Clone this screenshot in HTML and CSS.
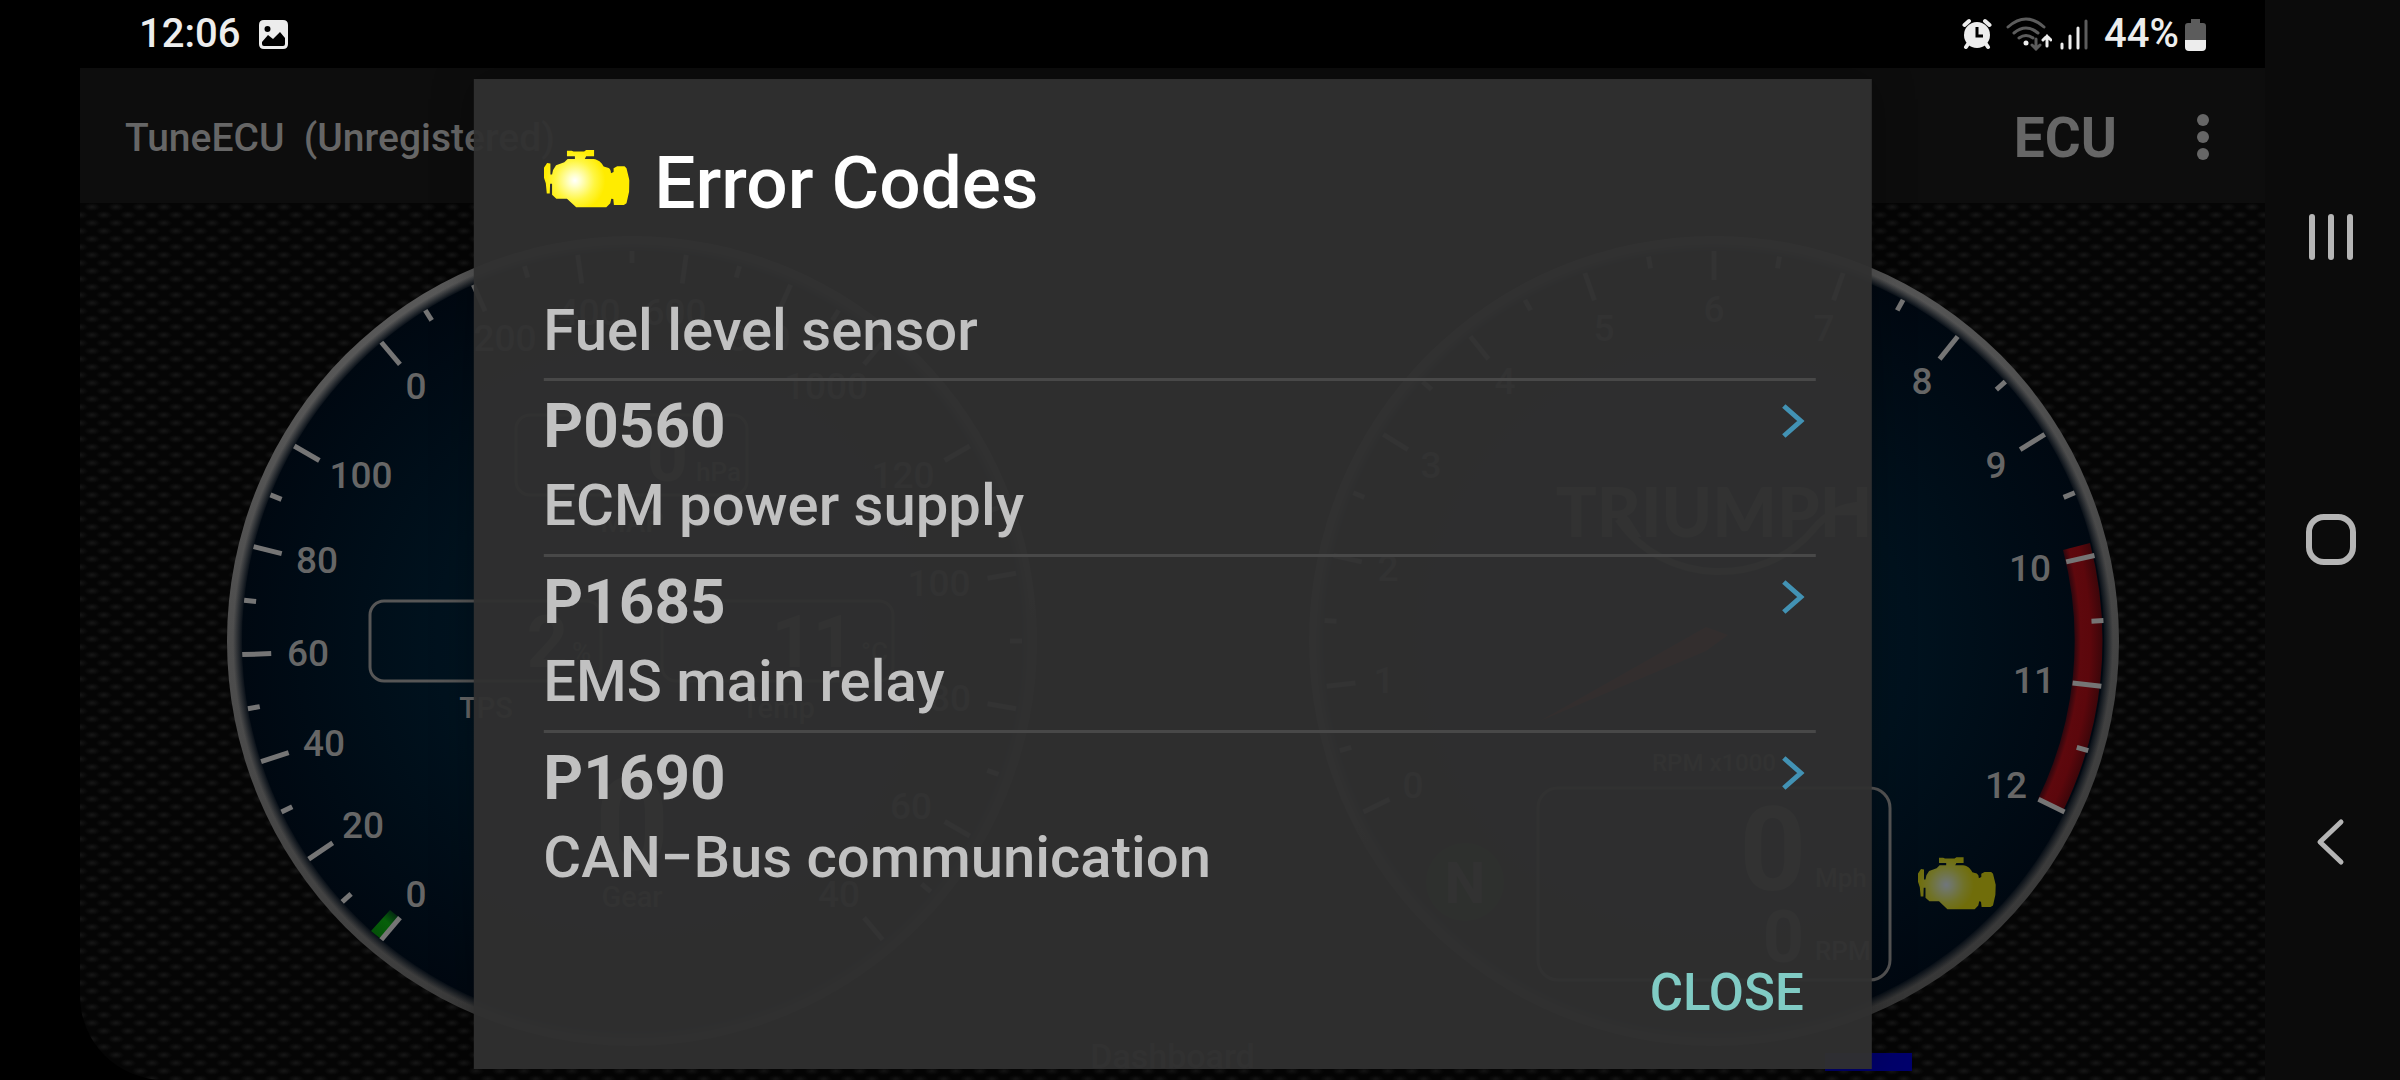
FILE: index.html
```html
<!DOCTYPE html>
<html lang="en">
<head>
    <meta charset="UTF-8">
    <meta name="viewport" content="width=device-width, initial-scale=1.0">
    <title>TuneECU - Error Codes</title>
    <link rel="stylesheet" href="styles.css">
</head>
<body>
    <!-- Shared drawings -->
    <svg class="defs" width="0" height="0" aria-hidden="true">
        <defs>
            <radialGradient id="engineFill" gradientUnits="userSpaceOnUse" cx="94" cy="92" r="92">
                <stop offset="0" stop-color="#ffffff"/>
                <stop offset="0.2" stop-color="#ffffc8"/>
                <stop offset="0.65" stop-color="#fff640"/>
                <stop offset="1" stop-color="#ffec00"/>
            </radialGradient>
            <radialGradient id="face" gradientUnits="userSpaceOnUse" cx="0" cy="0" r="392">
                <stop offset="0" stop-color="#001624"/>
                <stop offset="0.5" stop-color="#00121e"/>
                <stop offset="0.85" stop-color="#000b15"/>
                <stop offset="1" stop-color="#000811"/>
            </radialGradient>
            <linearGradient id="rim" x1="0.3" y1="0" x2="0.6" y2="1">
                <stop offset="0" stop-color="#5a5a5a"/>
                <stop offset="0.5" stop-color="#4a4a4a"/>
                <stop offset="1" stop-color="#363636"/>
            </linearGradient>
            <radialGradient id="rimShade" gradientUnits="userSpaceOnUse" cx="0" cy="0" r="405">
                <stop offset="0.96" stop-color="#000811" stop-opacity="1"/>
                <stop offset="0.985" stop-color="#000811" stop-opacity="0"/>
            </radialGradient>
            <radialGradient id="redZone" gradientUnits="userSpaceOnUse" cx="0" cy="0" r="388">
                <stop offset="0.925" stop-color="#20060e"/>
                <stop offset="0.945" stop-color="#5e080d"/>
                <stop offset="0.97" stop-color="#5c070c"/>
                <stop offset="1" stop-color="#3d060a"/>
            </radialGradient>
            <linearGradient id="greenZone" gradientUnits="userSpaceOnUse" x1="-262" y1="292" x2="-240" y2="268">
                <stop offset="0" stop-color="#044f08"/>
                <stop offset="0.6" stop-color="#06600a"/>
                <stop offset="1" stop-color="#022312"/>
            </linearGradient>
        </defs>
        <symbol id="engine" viewBox="0 0 260 175">
            <path fill="url(#engineFill)" d="M70 2H84L90 4H122L128 0H152V19H128L124 27H150C166 29 175 38 181 50L196 54Q203 58 203 70L211 66V55L222 49H244L250 55L259 92L258 125L250 161L242 166H212L210 148L204 147L201 161L189 173H98L70 147H38L25 135V102H19L18 131H9L6 100L0 82V54L10 39L20 41V74H25L28 60L37 46L62 37L72 27H94V19H70Z"/>
        </symbol>
    </svg>

    <div class="device">
        <div class="main">
            <header class="status-bar">
                <div class="status-group">
                    <span>12:06</span>
                    <svg class="icon-picture" viewBox="0 0 29 29" width="29" height="29">
                        <path fill="#ededed" fill-rule="evenodd" d="M5 0H24Q29 0 29 5V24Q29 29 24 29H5Q0 29 0 24V5Q0 0 5 0ZM8.500 6A3 3 0 1 0 8.500 12A3 3 0 1 0 8.500 6ZM3 22V24Q3 26 5 26H24Q26 26 26 24V18L21 12L14 19L9 15Z"/>
                    </svg>
                </div>
                <div class="status-group status-right">
                    <svg viewBox="0 0 30 32" width="30" height="32">
                        <g fill="none" stroke="#ededed" stroke-width="4" stroke-linecap="round">
                            <path d="M2.500 7L7 3M27.500 7L23 3M6 26L4 29M24 26L26 29"/>
                        </g>
                        <circle cx="15" cy="17" r="13" fill="#ededed"/>
                        <path d="M15 9V18H21" fill="none" stroke="#000" stroke-width="3"/>
                    </svg>
                    <svg class="icon-wifi" viewBox="0 0 46 34" width="46" height="34">
                        <g fill="none" stroke="#5c5c5c" stroke-width="3" stroke-linecap="round">
                            <path d="M2 10Q20 -6 38 10M8 16Q20 6 32 16M13 21Q20 16 27 21"/>
                            <path d="M30 22V32M26 28L30 32L34 28"/>
                        </g>
                        <circle cx="20" cy="26" r="2.500" fill="#ededed"/>
                        <path d="M41 29V19M37 23L41 19L45 23" fill="none" stroke="#ededed" stroke-width="3" stroke-linecap="round"/>
                    </svg>
                    <svg class="icon-signal" viewBox="0 0 28 32" width="28" height="32">
                        <g fill="none" stroke="#ededed" stroke-width="3" stroke-linecap="round">
                            <path d="M2 26V30M10 18V30M18 10V30"/>
                            <path d="M26 3V30" stroke="#5c5c5c"/>
                        </g>
                    </svg>
                    <span>44%</span>
                    <svg class="icon-battery" viewBox="0 0 21 32" width="21" height="32">
                        <path fill="#5c5c5c" d="M6 0H15V4H18Q21 4 21 7V21H0V7Q0 4 3 4H6Z"/>
                        <path fill="#ededed" d="M0 21H21V28Q21 32 17 32H4Q0 32 0 28Z"/>
                    </svg>
                </div>
            </header>

            <div class="app">
                <div class="app-bar">
                    <h1 class="app-title">TuneECU&nbsp; (Unregistered)</h1>
                    <div class="app-actions">
                        <button class="ecu-button">ECU</button>
                        <button class="menu-button" aria-label="More options">
                            <svg viewBox="0 0 12 48" width="12" height="48" fill="#666">
                                <circle cx="6" cy="6" r="6"/>
                                <circle cx="6" cy="23" r="6"/>
                                <circle cx="6" cy="40" r="6"/>
                            </svg>
                        </button>
                    </div>
                </div>

                <div class="dashboard">
                    <svg class="gauge" viewBox="-405 -405 810 810">
                        <circle r="405" fill="url(#rim)"/>
                        <circle r="400" fill="url(#rimShade)"/>
                        <circle r="390" fill="url(#face)"/>
                        <path fill="url(#greenZone)" d="M-261 290A390 390 0 0 0 -251 298L-232 277A361 361 0 0 1 -242 269Z"/>
                        <g class="ticks" data-start="220" data-end="300" data-step="16"></g>
                        <g class="ticks" data-start="320" data-end="400" data-step="16"></g>
                        <g class="ticks" data-start="60" data-end="140" data-step="20"></g>
                        <g class="scale">
                            <text x="-216" y="266">0</text>
                            <text x="-269" y="197">20</text>
                            <text x="-308" y="115">40</text>
                            <text x="-324" y="25">60</text>
                            <text x="-315" y="-68">80</text>
                            <text x="-271" y="-153">100</text>
                            <text x="-216" y="-242">0</text>
                            <text x="-127" y="-290">200</text>
                            <text x="-43" y="-316">400</text>
                            <text x="43" y="-316">600</text>
                            <text x="127" y="-290">800</text>
                            <text x="194" y="-242">1000</text>
                            <text x="271" y="-153">120</text>
                            <text x="307" y="-45">100</text>
                            <text x="318" y="70">80</text>
                            <text x="279" y="178">60</text>
                            <text x="207" y="266">40</text>
                        </g>
                        <g class="box">
                            <rect x="-116" y="-226" width="231" height="80" rx="14"/>
                            <rect x="-262" y="-40" width="231" height="80" rx="14"/>
                            <rect x="30" y="-40" width="231" height="80" rx="14"/>
                        </g>
                        <g class="readout">
                            <text x="56" y="-160">0</text>
                            <text x="-64" y="26">2</text>
                            <text x="222" y="26">11</text>
                        </g>
                        <text class="readout-gear" x="0" y="229">0</text>
                        <g class="unit">
                            <text x="64" y="-160">hPa</text>
                            <text x="-60" y="20">%</text>
                            <text x="229" y="20">°C</text>
                        </g>
                        <g class="caption">
                            <text x="0" y="-109">MAP</text>
                            <text x="-146" y="77">TPS</text>
                            <text x="146" y="77">Temp</text>
                            <text x="0" y="266">Gear</text>
                        </g>
                    </svg>

                    <svg class="gauge" viewBox="-405 -405 810 810">
                        <circle r="405" fill="url(#rim)"/>
                        <circle r="400" fill="url(#rimShade)"/>
                        <circle r="390" fill="url(#face)"/>
                        <path fill="url(#redZone)" d="M376 -98A388 388 0 0 1 349 170L324 158A360 360 0 0 0 349 -91Z"/>
                        <g class="ticks" data-start="-116" data-end="116" data-count="12"></g>
                        <g class="scale">
                            <text x="-301" y="157">0</text>
                            <text x="-330" y="52">1</text>
                            <text x="-326" y="-60">2</text>
                            <text x="-283" y="-163">3</text>
                            <text x="-209" y="-247">4</text>
                            <text x="-110" y="-300">5</text>
                            <text x="0" y="-319">6</text>
                            <text x="110" y="-300">7</text>
                            <text x="208" y="-247">8</text>
                            <text x="282" y="-163">9</text>
                            <text x="316" y="-60">10</text>
                            <text x="320" y="52">11</text>
                            <text x="292" y="157">12</text>
                        </g>
                        <text class="brand" x="0" y="-104">TRIUMPH</text>
                        <path d="M-96 -122C-50 -54 50 -54 98 -110Q118 -136 150 -136" fill="none" stroke="#606060" stroke-width="7"/>
                        <path d="M-174 80L-8 -14L14 -6L-8 10Z" fill="#8a0c10"/>
                        <text class="caption-small" x="0" y="130">RPM x1000</text>
                        <g class="box">
                            <rect x="-176" y="147" width="352" height="192" rx="20"/>
                        </g>
                        <circle cx="-249" cy="241" r="39" fill="#0a420a"/>
                        <text class="neutral" x="-249" y="262">N</text>
                        <text class="readout-speed" x="92" y="249">0</text>
                        <text class="readout" x="90" y="321">0</text>
                        <g class="unit">
                            <text x="101" y="246">Mph</text>
                            <text x="101" y="319">RPM</text>
                        </g>
                        <use href="#engine" x="204" y="216" width="78" height="53" opacity="0.44"/>
                    </svg>

                    <span class="page-name">Dashboard</span>
                    <span class="page-marker"></span>
                </div>
            </div>

            <div class="dialog" role="dialog" aria-labelledby="dialogTitle">
                <div class="dialog-head">
                    <svg class="dialog-icon" viewBox="0 0 260 175"><use href="#engine"/></svg>
                    <h2 id="dialogTitle">Error Codes</h2>
                </div>
                <ul class="codes">
                    <li class="code-item">
                        <span class="code-text">Fuel level sensor</span>
                    </li>
                    <li class="code-item">
                        <span class="code">P0560</span>
                        <svg class="chevron" viewBox="0 0 24 36"><path d="M3 3L20 18L3 33"/></svg>
                        <span class="code-text">ECM power supply</span>
                    </li>
                    <li class="code-item">
                        <span class="code">P1685</span>
                        <svg class="chevron" viewBox="0 0 24 36"><path d="M3 3L20 18L3 33"/></svg>
                        <span class="code-text">EMS main relay</span>
                    </li>
                    <li class="code-item">
                        <span class="code">P1690</span>
                        <svg class="chevron" viewBox="0 0 24 36"><path d="M3 3L20 18L3 33"/></svg>
                        <span class="code-text">CAN−Bus communication</span>
                    </li>
                </ul>
                <div class="dialog-actions">
                    <button class="close-button">CLOSE</button>
                </div>
            </div>
        </div>

        <nav class="nav-bar">
            <button aria-label="Recent apps">
                <svg viewBox="0 0 52 52" width="52" height="52">
                    <path d="M7 6V46M26 6V46M45 6V46" stroke-width="6"/>
                </svg>
            </button>
            <button aria-label="Home">
                <svg viewBox="0 0 52 52" width="52" height="52">
                    <rect x="4" y="3" width="44" height="45" rx="15" stroke-width="6"/>
                </svg>
            </button>
            <button aria-label="Back">
                <svg viewBox="0 0 52 52" width="52" height="52">
                    <path d="M36 5L15 25L36 45" stroke-width="5"/>
                </svg>
            </button>
        </nav>
    </div>

    <script>
        // Draw the tick marks: a long one on each step, a short one halfway
        document.querySelectorAll('.ticks').forEach((group) => {
            const start = Number(group.dataset.start);
            const end = Number(group.dataset.end);
            const step = group.dataset.count ? (end - start) / group.dataset.count : Number(group.dataset.step);

            for (let i = 0; start + i * step / 2 <= end + 0.01; i++) {
                const angle = start + i * step / 2;
                const line = document.createElementNS('http://www.w3.org/2000/svg', 'line');
                line.setAttribute('y1', -390);
                line.setAttribute('y2', i % 2 ? -378 : -361);
                line.setAttribute('transform', `rotate(${angle})`);
                group.appendChild(line);
            }
        });
    </script>
</body>
</html>
```
FILE: styles.css
```css
* { box-sizing: border-box; }

body {
    margin: 0;
    background: #000;
    font-family: Roboto, "Liberation Sans", sans-serif;
    font-weight: 500;
}

button {
    padding: 0;
    border: none;
    background: none;
    font: inherit;
    color: inherit;
    cursor: pointer;
}

svg { display: block; }

.defs { position: absolute; }

.device {
    display: flex;
    height: 100vh;
    padding-left: 80px;
    overflow: hidden;
}

.main {
    position: relative;
    display: flex;
    flex-direction: column;
    flex: 1;
    min-width: 0;
}

/* Status bar */
.status-bar {
    display: flex;
    justify-content: space-between;
    align-items: center;
    height: 68px;
    padding: 0 59px;
    color: #ededed;
    font-size: 40px;
    line-height: 68px;
}

.status-group {
    display: flex;
    align-items: center;
    gap: 19px;
}

.status-right { gap: 14px; }

.icon-wifi { margin-right: -6px; }

.icon-signal { margin-right: 2px; }

.icon-battery { margin: 2px 0 0 -8px; }

/* App */
.app {
    display: flex;
    flex-direction: column;
    flex: 1;
    min-height: 0;
    overflow: hidden;
    border-bottom-left-radius: 84px;
    background-color: #050505;
    background-image:
        radial-gradient(ellipse 8px 4px at 12px 4px, #171717, transparent),
        radial-gradient(ellipse 8px 4px at 0 12px, #171717, transparent),
        radial-gradient(ellipse 8px 4px at 24px 12px, #171717, transparent);
    background-size: 24px 16px;
    background-position: 0 7px;
}

.app-bar {
    display: flex;
    justify-content: space-between;
    align-items: center;
    height: 135px;
    padding: 4px 56px 0 45px;
    background: #0d0d0d;
    color: #666;
}

.app-title {
    margin: 0;
    font-size: 39px;
    font-weight: 500;
}

.app-actions {
    display: flex;
    align-items: center;
    gap: 80px;
}

.ecu-button {
    font-size: 55px;
    font-weight: 700;
}

/* Gauges */
.dashboard {
    position: relative;
    display: flex;
    justify-content: space-between;
    align-items: flex-start;
    flex: 1;
    padding: 33px 146px 0 147px;
}

.gauge {
    width: 810px;
    height: 810px;
    fill: #666;
}

.ticks {
    stroke: #757575;
    stroke-width: 5;
}

.scale {
    font-size: 37px;
    text-anchor: middle;
}

.box {
    fill: none;
    stroke: #565656;
    stroke-width: 3;
}

.readout {
    font-size: 72px;
    font-weight: 700;
    text-anchor: end;
}

.readout-gear {
    font-size: 130px;
    font-weight: 700;
    text-anchor: middle;
}

.readout-speed {
    font-size: 116px;
    font-weight: 700;
    text-anchor: end;
}

.unit { font-size: 26px; }

.caption {
    font-size: 29px;
    text-anchor: middle;
}

.caption-small {
    font-size: 24px;
    text-anchor: middle;
}

.brand {
    font-family: Lato, Roboto, sans-serif;
    font-size: 68px;
    font-weight: 900;
    text-anchor: middle;
}

.neutral {
    font-size: 58px;
    font-weight: 700;
    text-anchor: middle;
}

.page-name {
    position: absolute;
    bottom: 4px;
    left: 50%;
    transform: translateX(-50%);
    color: #555;
    font-size: 34px;
}

.page-marker {
    position: absolute;
    right: 353px;
    bottom: 9px;
    width: 87px;
    height: 18px;
    background: #00006c;
}

/* Error dialog, shown over the dashboard */
.dialog {
    position: absolute;
    top: 79px;
    bottom: 11px;
    left: 50%;
    display: flex;
    flex-direction: column;
    width: 64%;
    padding: 0 56px 0 70px;
    transform: translateX(-50%);
    background: rgba(48, 48, 48, 0.96);
    box-shadow: 0 0 40px rgba(0, 0, 0, 0.3);
}

.dialog-head {
    display: flex;
    align-items: center;
    gap: 25px;
    padding-top: 60px;
    color: #fff;
}

.dialog-head h2 {
    margin: 0;
    font-size: 73px;
    font-weight: 500;
    line-height: 88px;
}

.dialog-icon {
    width: 86px;
    height: 58px;
    margin-bottom: 8px;
}

.codes {
    flex: 1;
    margin: 0;
    padding: 65px 0 0;
    list-style: none;
    color: #c1c1c1;
}

.code-item {
    display: grid;
    grid-template-columns: 1fr auto;
    row-gap: 2px;
    align-items: center;
    height: 176px;
    padding: 7px 0 11px;
    border-bottom: 3px solid #484848;
}

.code-item:first-child {
    height: 89px;
    padding: 0 0 10px;
}

.code-item:last-child { border-color: transparent; }

.code {
    font-size: 62px;
    font-weight: 700;
    line-height: 76px;
}

.code-text {
    font-size: 58px;
    line-height: 76px;
}

.chevron {
    width: 24px;
    height: 36px;
    margin: 0 11px 10px 0;
    fill: none;
    stroke: #4292b4;
    stroke-width: 5;
}

.dialog-actions {
    display: flex;
    justify-content: flex-end;
    padding: 0 12px 44px;
}

.close-button {
    color: #80cbc4;
    font-size: 51px;
    line-height: 64px;
}

/* System navigation */
.nav-bar {
    display: flex;
    flex-direction: column;
    justify-content: space-between;
    align-items: center;
    width: 135px;
    padding: 211px 4px 211px 0;
    background: #0b0b0b;
}

.nav-bar svg {
    fill: none;
    stroke: #b5b5b5;
    stroke-linecap: round;
    stroke-linejoin: round;
}
```
